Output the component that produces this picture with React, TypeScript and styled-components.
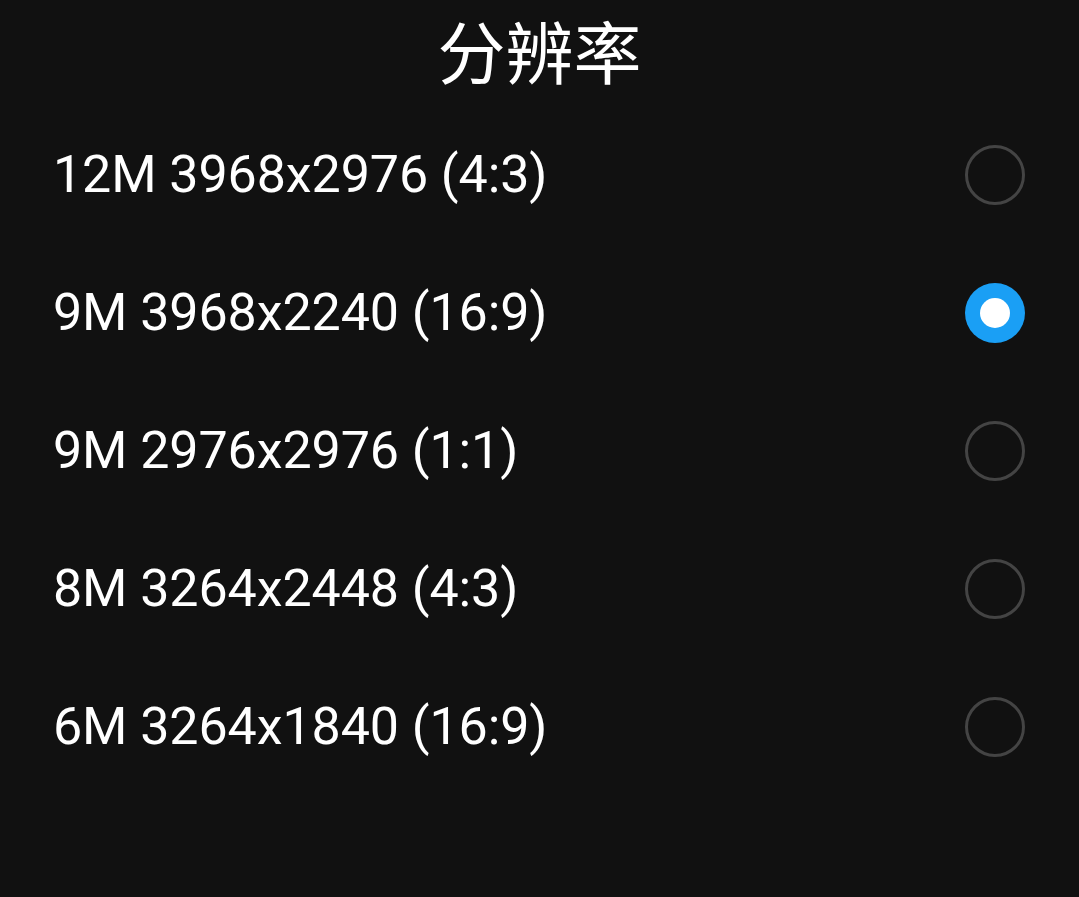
import styled, { createGlobalStyle } from 'styled-components';

const GlobalStyle = createGlobalStyle`
  html, body {
    margin: 0;
    padding: 0;
    background: #111111;
  }
  #root {
    min-height: 897px;
  }
`;

const options = [
  { label: '12M 3968x2976 (4:3)', selected: false },
  { label: '9M 3968x2240 (16:9)', selected: true },
  { label: '9M 2976x2976 (1:1)', selected: false },
  { label: '8M 3264x2448 (4:3)', selected: false },
  { label: '6M 3264x1840 (16:9)', selected: false },
];

const App = () => {
  return (
    <>
      <GlobalStyle />
      <Sheet>
        <Title>分辨率</Title>
        <List>
          {options.map((o) => (
            <Row key={o.label}>
              <Label>{o.label}</Label>
              <Radio $selected={o.selected} />
            </Row>
          ))}
        </List>
      </Sheet>
    </>
  );
};

const Sheet = styled.div`
  width: 1079px;
  height: 897px;
  background: #111111;
  display: flex;
  flex-direction: column;
  font-family: Roboto, 'Noto Sans CJK SC', sans-serif;
  color: #ffffff;
`;

const Title = styled.div`
  height: 106px;
  display: flex;
  align-items: center;
  justify-content: center;
  font-family: 'Noto Sans CJK SC', sans-serif;
  font-size: 68px;
  font-weight: 400;
  line-height: 1;
  padding-bottom: 6px;
  box-sizing: border-box;
`;

const List = styled.div`
  display: flex;
  flex-direction: column;
`;

const Row = styled.div`
  height: 138px;
  display: flex;
  align-items: center;
  justify-content: space-between;
  padding: 0 54px 0 53px;
`;

const Label = styled.span`
  font-size: 52px;
  line-height: 1;
  letter-spacing: -0.1px;
`;

const Radio = styled.span<{ $selected: boolean }>`
  width: 60px;
  height: 60px;
  border-radius: 50%;
  box-sizing: border-box;
  display: flex;
  align-items: center;
  justify-content: center;
  border: ${(p) => (p.$selected ? 'none' : '3px solid #444444')};
  background: ${(p) => (p.$selected ? '#1a9ff5' : 'transparent')};

  &::after {
    content: '';
    display: ${(p) => (p.$selected ? 'block' : 'none')};
    width: 30px;
    height: 30px;
    border-radius: 50%;
    background: #ffffff;
  }
`;

export default App;
